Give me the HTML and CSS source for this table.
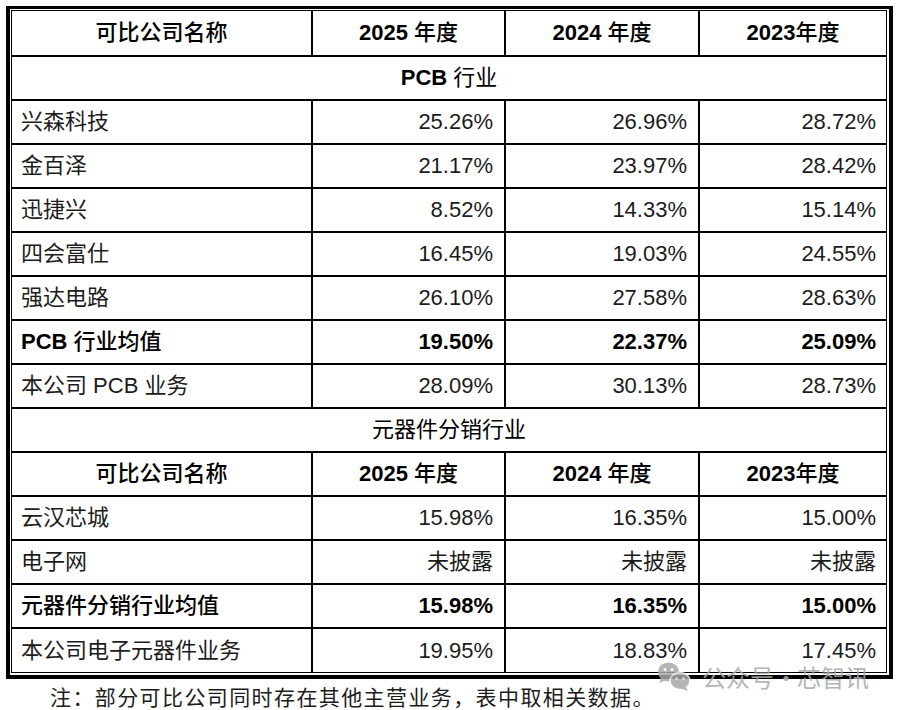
FILE: index.html
```html
<!DOCTYPE html>
<html lang="zh-CN">
<head>
<meta charset="utf-8">
<title>可比公司毛利率</title>
<link rel="stylesheet" href="styles.css">
</head>
<body>
<div class="page">
  <div class="frame">
    <table class="data">
      <tr class="head first">
        <td class="name">可比公司名称</td>
        <td class="w2"><b>2025</b> 年度</td>
        <td class="w3"><b>2024</b> 年度</td>
        <td class="w4"><b>2023</b>年度</td>
      </tr>
      <tr class="section"><td colspan="4"><b>PCB</b> 行业</td></tr>
      <tr><td class="name">兴森科技</td><td>25.26%</td><td>26.96%</td><td>28.72%</td></tr>
      <tr><td class="name">金百泽</td><td>21.17%</td><td>23.97%</td><td>28.42%</td></tr>
      <tr><td class="name">迅捷兴</td><td>8.52%</td><td>14.33%</td><td>15.14%</td></tr>
      <tr><td class="name">四会富仕</td><td>16.45%</td><td>19.03%</td><td>24.55%</td></tr>
      <tr><td class="name">强达电路</td><td>26.10%</td><td>27.58%</td><td>28.63%</td></tr>
      <tr class="avg"><td class="name"><b>PCB</b> 行业均值</td><td><b>19.50%</b></td><td><b>22.37%</b></td><td><b>25.09%</b></td></tr>
      <tr><td class="name">本公司 PCB 业务</td><td>28.09%</td><td>30.13%</td><td>28.73%</td></tr>
      <tr class="section"><td colspan="4">元器件分销行业</td></tr>
      <tr class="head">
        <td class="name">可比公司名称</td>
        <td><b>2025</b> 年度</td>
        <td><b>2024</b> 年度</td>
        <td><b>2023</b>年度</td>
      </tr>
      <tr><td class="name">云汉芯城</td><td>15.98%</td><td>16.35%</td><td>15.00%</td></tr>
      <tr><td class="name">电子网</td><td>未披露</td><td>未披露</td><td>未披露</td></tr>
      <tr class="avg"><td class="name">元器件分销行业均值</td><td><b>15.98%</b></td><td><b>16.35%</b></td><td><b>15.00%</b></td></tr>
      <tr class="last"><td class="name">本公司电子元器件业务</td><td>19.95%</td><td>18.83%</td><td>17.45%</td></tr>
    </table>
  </div>
  <p class="note">注：部分可比公司同时存在其他主营业务，表中取相关数据。</p>
  <div class="watermark">
    <svg class="wx" width="34" height="30" viewBox="0 0 34 30">
      <ellipse cx="11.5" cy="10" rx="10.5" ry="9.5" fill="#a9a9a9"/>
      <path d="M4 15 L2.5 21 L9 18 Z" fill="#a9a9a9"/>
      <ellipse cx="23" cy="19" rx="10" ry="8.5" fill="#a9a9a9" stroke="#fff" stroke-width="1.5"/>
      <path d="M28 24 L31 29 L24 26.5 Z" fill="#a9a9a9"/>
      <circle cx="8" cy="7.5" r="1.5" fill="#fff"/>
      <circle cx="15" cy="7.5" r="1.5" fill="#fff"/>
      <circle cx="19.5" cy="16.5" r="1.2" fill="#fff"/>
      <circle cx="26.5" cy="16.5" r="1.2" fill="#fff"/>
    </svg>
    <span class="wm-text">公众号</span>
    <span class="wm-dot">·</span>
    <span class="wm-text">芯智讯</span>
  </div>
</div>
</body>
</html>
```

FILE: styles.css
```css
html, body {
  margin: 0;
  padding: 0;
  background: #ffffff;
}

.page {
  position: relative;
  width: 898px;
  height: 710px;
  padding: 6px 0 0 6px;
  box-sizing: border-box;
  font-family: "Liberation Sans", "Noto Sans CJK SC", sans-serif;
  color: #1c1c1c;
}

.frame {
  display: inline-block;
  border-style: solid;
  border-color: #000;
  border-width: 3px 4px 4px 4px;
  padding: 1px 2px 2px 1px;
}

.data {
  width: 876px;
  table-layout: fixed;
  border-collapse: separate;
  border-spacing: 0;
  border: 1px solid #000;
  font-size: 22px;
}

.data td {
  box-sizing: border-box;
  height: 44px;
  padding: 0 11px 0 9px;
  border-right: 2px solid #000;
  border-bottom: 2px solid #000;
  text-align: right;
  vertical-align: middle;
  white-space: nowrap;
  line-height: 16px;
}

.data td:last-child {
  border-right: none;
  padding-right: 10px;
}

.data td.name {
  text-align: left;
}

.data b {
  font-weight: 700;
  color: #000;
}

.data tr.first td {
  height: 46px;
}

.data tr.first td.name { width: 301px; }
.data tr.first td.w2 { width: 193px; }
.data tr.first td.w3 { width: 194px; }
.data tr.first td.w4 { width: 186px; }

.data tr.last td {
  height: 43px;
  border-bottom: none;
}

.data tr.head td {
  text-align: center;
  font-weight: 500;
  color: #000;
  padding-left: 0;
  padding-right: 0;
}

.data tr.section td {
  text-align: center;
  color: #000;
  padding: 0;
}

.data tr.avg td {
  font-weight: 500;
  color: #000;
}

.note {
  margin: 0 0 0 44px;
  font-family: "Noto Sans CJK SC", sans-serif;
  font-size: 21px;
  line-height: 26px;
  letter-spacing: 1.4px;
  color: #1c1c1c;
}

.watermark {
  position: absolute;
  left: 657px;
  top: 662px;
  display: flex;
  align-items: center;
  opacity: 0.85;
  font-family: "Noto Sans CJK SC", sans-serif;
  color: #a9a9a9;
  font-size: 24px;
  line-height: 22px;
}

.watermark .wx {
  display: block;
  margin-right: 11px;
}

.watermark .wm-dot {
  display: inline-block;
  width: 20px;
  margin-right: 3px;
  text-align: center;
  overflow: visible;
}
```
